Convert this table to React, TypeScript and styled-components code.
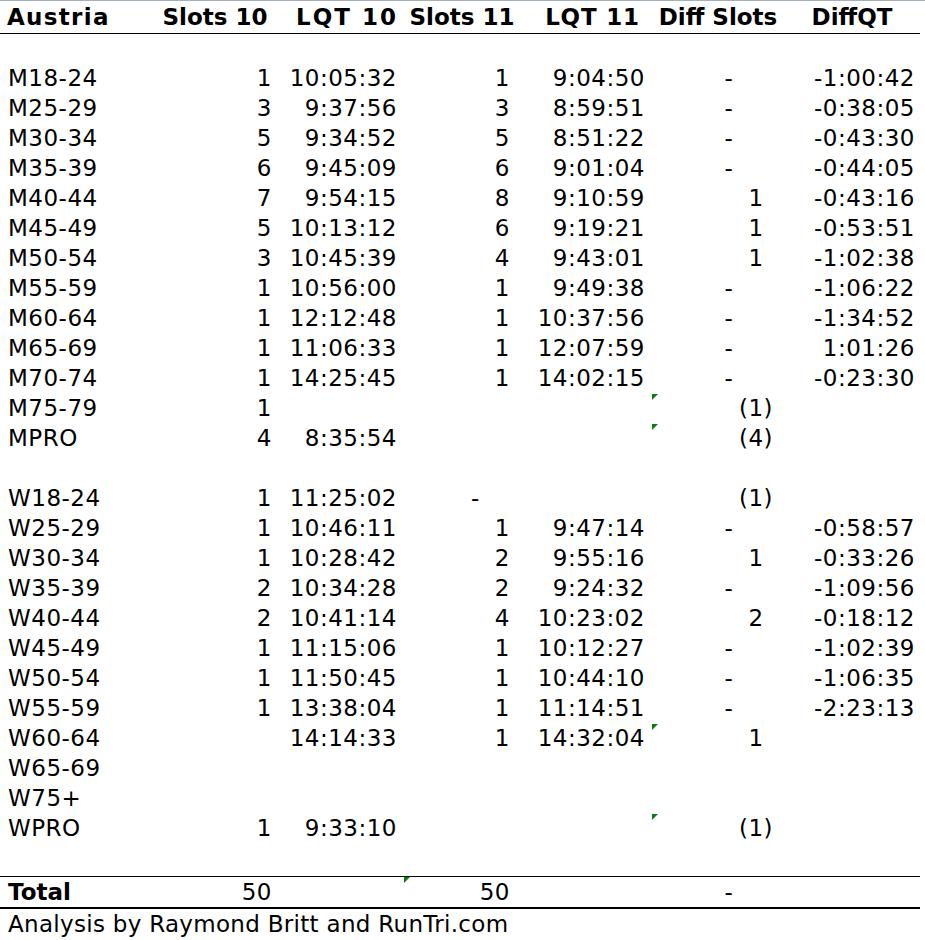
import React from "react";
import styled, { createGlobalStyle } from "styled-components";

const GlobalStyle = createGlobalStyle`
  html, body {
    margin: 0;
    padding: 0;
    background: #fff;
  }
  body {
    font-family: "DejaVu Sans", Verdana, sans-serif;
    color: #000;
  }
`;

const COLS = "155px 122px 125px 113px 135px 128px 142px";

type Row = {
  group: string;
  s10?: string;
  q10?: string;
  s11?: string;
  q11?: string;
  diff?: string;
  dq?: string;
  note?: boolean;
};

const men: Row[] = [
  { group: "M18-24", s10: "1", q10: "10:05:32", s11: "1", q11: "9:04:50", diff: "-", dq: "-1:00:42" },
  { group: "M25-29", s10: "3", q10: "9:37:56", s11: "3", q11: "8:59:51", diff: "-", dq: "-0:38:05" },
  { group: "M30-34", s10: "5", q10: "9:34:52", s11: "5", q11: "8:51:22", diff: "-", dq: "-0:43:30" },
  { group: "M35-39", s10: "6", q10: "9:45:09", s11: "6", q11: "9:01:04", diff: "-", dq: "-0:44:05" },
  { group: "M40-44", s10: "7", q10: "9:54:15", s11: "8", q11: "9:10:59", diff: "1", dq: "-0:43:16" },
  { group: "M45-49", s10: "5", q10: "10:13:12", s11: "6", q11: "9:19:21", diff: "1", dq: "-0:53:51" },
  { group: "M50-54", s10: "3", q10: "10:45:39", s11: "4", q11: "9:43:01", diff: "1", dq: "-1:02:38" },
  { group: "M55-59", s10: "1", q10: "10:56:00", s11: "1", q11: "9:49:38", diff: "-", dq: "-1:06:22" },
  { group: "M60-64", s10: "1", q10: "12:12:48", s11: "1", q11: "10:37:56", diff: "-", dq: "-1:34:52" },
  { group: "M65-69", s10: "1", q10: "11:06:33", s11: "1", q11: "12:07:59", diff: "-", dq: "1:01:26" },
  { group: "M70-74", s10: "1", q10: "14:25:45", s11: "1", q11: "14:02:15", diff: "-", dq: "-0:23:30" },
  { group: "M75-79", s10: "1", diff: "(1)", note: true },
  { group: "MPRO", s10: "4", q10: "8:35:54", diff: "(4)", note: true },
];

const women: Row[] = [
  { group: "W18-24", s10: "1", q10: "11:25:02", s11: "-", diff: "(1)" },
  { group: "W25-29", s10: "1", q10: "10:46:11", s11: "1", q11: "9:47:14", diff: "-", dq: "-0:58:57" },
  { group: "W30-34", s10: "1", q10: "10:28:42", s11: "2", q11: "9:55:16", diff: "1", dq: "-0:33:26" },
  { group: "W35-39", s10: "2", q10: "10:34:28", s11: "2", q11: "9:24:32", diff: "-", dq: "-1:09:56" },
  { group: "W40-44", s10: "2", q10: "10:41:14", s11: "4", q11: "10:23:02", diff: "2", dq: "-0:18:12" },
  { group: "W45-49", s10: "1", q10: "11:15:06", s11: "1", q11: "10:12:27", diff: "-", dq: "-1:02:39" },
  { group: "W50-54", s10: "1", q10: "11:50:45", s11: "1", q11: "10:44:10", diff: "-", dq: "-1:06:35" },
  { group: "W55-59", s10: "1", q10: "13:38:04", s11: "1", q11: "11:14:51", diff: "-", dq: "-2:23:13" },
  { group: "W60-64", q10: "14:14:33", s11: "1", q11: "14:32:04", diff: "1", note: true },
  { group: "W65-69" },
  { group: "W75+" },
  { group: "WPRO", s10: "1", q10: "9:33:10", diff: "(1)", note: true },
];

// accounting-style value: keeps room for "00" and ")" as Excel does
function Acct({ value }: { value?: string }) {
  if (!value) return null;
  if (value === "-") return (<>-<Pad>00)</Pad></>);
  if (value.startsWith("(")) return <>{value}</>;
  return (<>{value}<Pad>)</Pad></>);
}

function Dash({ value }: { value?: string }) {
  if (value === "-") return (<>-<Pad>00</Pad></>);
  return <>{value}</>;
}

function DataRow({ row }: { row: Row }) {
  return (
    <Line>
      <Group>{row.group}</Group>
      <Num>{row.s10}</Num>
      <Num>{row.q10}</Num>
      <Num><Dash value={row.s11} /></Num>
      <Num>{row.q11}</Num>
      <Num $note={row.note}><Acct value={row.diff} /></Num>
      <Num>{row.dq}</Num>
    </Line>
  );
}

function App() {
  return (
    <Page>
      <GlobalStyle />
      <Sheet>
        <HeaderRow>
          <HeadCell $align="flex-start" $pl={7} $track={1.3}>Austria</HeadCell>
          <HeadCell $pr={2}>Slots 10</HeadCell>
          <HeadCell $pl={15} $track={2}>LQT 10</HeadCell>
          <HeadCell $pl={7}>Slots 11</HeadCell>
          <HeadCell $pl={20} $track={0.8}>LQT 11</HeadCell>
          <HeadCell $pl={8}>Diff Slots</HeadCell>
          <HeadCell $pl={6}>DiffQT</HeadCell>
        </HeaderRow>
        <Spacer $h={29} />
        {men.map((r) => (
          <DataRow key={r.group} row={r} />
        ))}
        <Spacer $h={30} />
        {women.map((r) => (
          <DataRow key={r.group} row={r} />
        ))}
        <Spacer $h={33} />
        <TotalRow>
          <TotalLabel>Total</TotalLabel>
          <Num>50</Num>
          <Num />
          <Num $note $noteTop={0}>50</Num>
          <Num />
          <Num><Acct value="-" /></Num>
          <Num />
        </TotalRow>
        <Credit>Analysis by Raymond Britt and RunTri.com</Credit>
      </Sheet>
    </Page>
  );
}

const Page = styled.div`
  width: 925px;
  min-height: 940px;
  border-top: 1px solid #a3b1bd;
  box-sizing: border-box;
  background: #fff;
`;

const Sheet = styled.div`
  width: 920px;
  font-size: 23px;
  letter-spacing: 0.5px;
`;

const HeaderRow = styled.div`
  display: grid;
  grid-template-columns: ${COLS};
  height: 32px;
  line-height: 32px;
  border-bottom: 1px solid #000;
  font-weight: bold;
  letter-spacing: 0;
`;

const HeadCell = styled.div<{ $align?: string; $pl?: number; $pr?: number; $track?: number }>`
  display: flex;
  justify-content: ${(p) => p.$align || "center"};
  padding-left: ${(p) => p.$pl || 0}px;
  padding-right: ${(p) => p.$pr || 0}px;
  letter-spacing: ${(p) => p.$track || 0}px;
  white-space: nowrap;
  min-width: 0;
`;

const Spacer = styled.div<{ $h: number }>`
  height: ${(p) => p.$h}px;
`;

const Line = styled.div`
  display: grid;
  grid-template-columns: ${COLS};
  height: 30px;
  line-height: 30px;
`;

const Group = styled.div`
  padding-left: 8px;
  white-space: nowrap;
`;

const Num = styled.div<{ $note?: boolean; $noteTop?: number }>`
  position: relative;
  text-align: right;
  padding-right: 5px;
  white-space: nowrap;

  &::before {
    content: "";
    display: ${(p) => (p.$note ? "block" : "none")};
    position: absolute;
    top: ${(p) => (p.$noteTop ?? 1)}px;
    left: 2px;
    width: 0;
    height: 0;
    border-top: 6px solid #0a7d0a;
    border-right: 6px solid transparent;
  }
`;

const Pad = styled.span`
  visibility: hidden;
`;

const TotalRow = styled(Line)`
  border-top: 1px solid #000;
  border-bottom: 2px solid #000;
`;

const TotalLabel = styled(Group)`
  font-weight: bold;
  letter-spacing: 0;
`;

const Credit = styled.div`
  height: 30px;
  line-height: 30px;
  padding-left: 8px;
  white-space: nowrap;
  letter-spacing: 0.3px;
`;

export default App;
